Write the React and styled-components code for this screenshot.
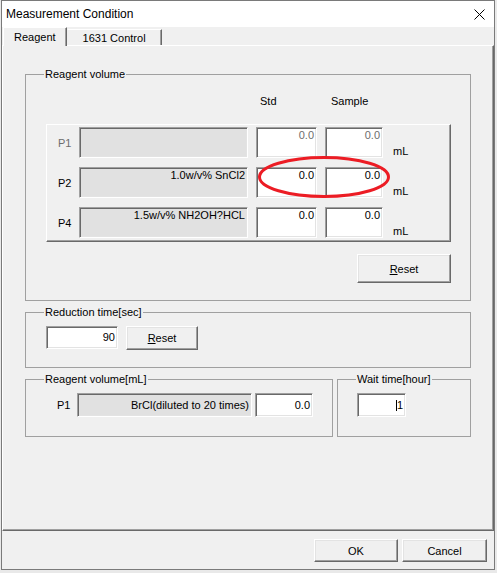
import React from "react";
import styled, { createGlobalStyle } from "styled-components";

const GlobalStyle = createGlobalStyle`
  html, body {
    margin: 0;
    padding: 0;
    background: #e9e9e9;
  }
  body {
    font-family: "Liberation Sans", Arial, sans-serif;
    font-size: 11px;
    color: #000;
  }
  * {
    box-sizing: border-box;
  }
`;

const Window = styled.div`
  margin-left: 1px;
  width: 494px;
  height: 570px;
  background: #f0f0f0;
  border: 1px solid #7a7a7a;
  display: flex;
  flex-direction: column;
`;

const TitleBar = styled.div`
  height: 26px;
  flex: none;
  background: #fff;
  display: flex;
  align-items: center;
  justify-content: space-between;
  padding: 0 9px 0 4px;
  font-size: 12px;
  color: #000;
`;

const TabStrip = styled.div`
  height: 18px;
  flex: none;
  display: flex;
  align-items: flex-end;
  padding-left: 1px;
`;

const Tab = styled.div`
  position: relative;
  display: flex;
  align-items: center;
  height: ${(p) => (p.$active ? "19px" : "16px")};
  margin-bottom: ${(p) => (p.$active ? "-1px" : "0")};
  z-index: ${(p) => (p.$active ? 1 : 0)};
  padding: ${(p) => (p.$active ? "0 10px" : "0 15px")};
  background: #f0f0f0;
  border-top: 1px solid #fff;
  border-left: 1px solid ${(p) => (p.$active ? "#fff" : "#f0f0f0")};
  border-right: 1px solid #696969;
  box-shadow: inset -1px 0 #a0a0a0;
  white-space: nowrap;
`;

const Panel = styled.div`
  flex: 1;
  display: flex;
  flex-direction: column;
  gap: 4px;
  padding: 21px 22px 0 22px;
  border-top: 1px solid #fff;
  border-left: 1px solid #fff;
  border-right: 1px solid #696969;
  border-bottom: 1px solid #696969;
  box-shadow: inset -1px -1px #a0a0a0;
`;

const Group = styled.fieldset`
  margin: 0;
  min-width: 0;
  border: 1px solid #a0a0a0;
  padding: ${(p) => p.$pad};
  display: flex;
  flex-direction: column;
  width: ${(p) => (p.$w ? `${p.$w}px` : "auto")};
`;

const Legend = styled.legend`
  margin-left: ${(p) => (p.$shift !== undefined ? p.$shift : -2)}px;
  padding: 0 1px;
  line-height: 14px;
  height: 14px;
`;

// label | reagent name | Std | Sample | unit
const columns = "24px 169px 61px 58px auto";

const ColumnHeads = styled.div`
  display: grid;
  grid-template-columns: ${columns};
  column-gap: 8px;
  line-height: 14px;
  padding-left: 1px;
  margin-bottom: 16px;
`;

const Head = styled.span`
  padding-left: ${(p) => p.$indent}px;
`;

const RaisedBox = styled.div`
  position: relative;
  width: 405px;
  padding: 2px 0 3px;
  display: grid;
  grid-template-columns: ${columns};
  grid-auto-rows: 31px;
  column-gap: 8px;
  row-gap: 9px;
  border: 1px solid;
  border-color: #fff #696969 #696969 #fff;
  box-shadow: inset -1px -1px #a0a0a0;
`;

const PLabel = styled.span`
  align-self: center;
  flex: none;
  width: ${(p) => (p.$w ? `${p.$w}px` : "auto")};
  padding-left: 11px;
  color: ${(p) => (p.$disabled ? "#6d6d6d" : "#000")};
  line-height: 14px;
`;

const Edit = styled.div`
  height: ${(p) => (p.$h ? `${p.$h}px` : "100%")};
  width: ${(p) => (p.$w ? `${p.$w}px` : "auto")};
  margin-left: ${(p) => p.$ml || 0}px;
  background: ${(p) => (p.$readonly ? "#e1e1e1" : "#fff")};
  color: ${(p) => (p.$disabled ? "#6d6d6d" : "#000")};
  border: 1px solid;
  border-color: #a0a0a0 #fff #fff #a0a0a0;
  box-shadow: inset 1px 1px #696969, inset -1px -1px #e3e3e3;
  padding: ${(p) => (p.$center ? "0 2px" : "1px 2px 0 2px")};
  line-height: ${(p) => (p.$center ? `${p.$h - 2}px` : "13px")};
  text-align: right;
  white-space: nowrap;
  overflow: hidden;
  flex: none;
`;

const Unit = styled.span`
  align-self: end;
  padding-left: 2px;
  line-height: 14px;
`;

const Ring = styled.svg`
  position: absolute;
  left: 211px;
  top: 31px;
  overflow: visible;
  pointer-events: none;
`;

const Button = styled.button`
  font-family: inherit;
  font-size: 11px;
  color: #000;
  width: ${(p) => p.$w}px;
  height: ${(p) => p.$h}px;
  background: #f0f0f0;
  border: 1px solid;
  border-color: #fff #696969 #696969 #fff;
  box-shadow: inset -1px -1px #a0a0a0, inset 1px 1px #e3e3e3;
  padding: 0;
  flex: none;
`;

const ResetRow = styled.div`
  display: flex;
  justify-content: flex-end;
  margin-top: 12px;
`;

const FieldRow = styled.div`
  display: flex;
  align-items: flex-start;
  gap: ${(p) => p.$gap || 0}px;
`;

const SplitRow = styled.div`
  display: flex;
  gap: 4px;
`;

const Caret = styled.span`
  display: inline-block;
  width: 1px;
  height: 11px;
  background: #000;
  vertical-align: -2px;
`;

const Footer = styled.div`
  height: 38px;
  flex: none;
  display: flex;
  justify-content: flex-end;
  align-items: flex-start;
  gap: 4px;
  padding: 8px 7px 0 0;
`;

function CloseIcon() {
  return (
    <svg width="11" height="11" viewBox="0 0 11 11">
      <path d="M0.5 0.5 L10.5 10.5 M10.5 0.5 L0.5 10.5" stroke="#000" strokeWidth="1" />
    </svg>
  );
}

const reagentRows = [
  { id: "P1", name: "", std: "0.0", sample: "0.0", disabled: true },
  { id: "P2", name: "1.0w/v% SnCl2", std: "0.0", sample: "0.0" },
  { id: "P4", name: "1.5w/v% NH2OH?HCL", std: "0.0", sample: "0.0" },
];

export default function App() {
  return (
    <>
      <GlobalStyle />
      <Window>
        <TitleBar>
          <span>Measurement Condition</span>
          <CloseIcon />
        </TitleBar>
        <TabStrip>
          <Tab $active>Reagent</Tab>
          <Tab>1631 Control</Tab>
        </TabStrip>
        <Panel>
          <Group $pad="13px 19px 17px 20px">
            <Legend>Reagent volume</Legend>
            <ColumnHeads>
              <span />
              <span />
              <Head $indent={4}>Std</Head>
              <Head $indent={6}>Sample</Head>
            </ColumnHeads>
            <RaisedBox>
              {reagentRows.map((r) => (
                <React.Fragment key={r.id}>
                  <PLabel $disabled={r.disabled}>{r.id}</PLabel>
                  <Edit $readonly>{r.name}</Edit>
                  <Edit $disabled={r.disabled}>{r.std}</Edit>
                  <Edit $disabled={r.disabled}>{r.sample}</Edit>
                  <Unit>mL</Unit>
                </React.Fragment>
              ))}
              <Ring width="132" height="42">
                <ellipse cx="66" cy="21" rx="64.5" ry="19.5" fill="none" stroke="#ec1c24" strokeWidth="3" />
              </Ring>
            </RaisedBox>
            <ResetRow>
              <Button $w={94} $h={29}>
                <u>R</u>eset
              </Button>
            </ResetRow>
          </Group>

          <Group $pad="7px 19px 17px 20px">
            <Legend>Reduction time[sec]</Legend>
            <FieldRow $gap={8}>
              <Edit $center $w={72} $h={23}>90</Edit>
              <Button $w={72} $h={24}>
                <u>R</u>eset
              </Button>
            </FieldRow>
          </Group>

          <SplitRow>
            <Group $w={308} $pad="7px 0 19px 20px">
              <Legend>Reagent volume[mL]</Legend>
              <FieldRow>
                <PLabel $w={31}>P1</PLabel>
                <Edit $readonly $center $w={175} $h={24}>BrCl(diluted to 20 times)</Edit>
                <Edit $center $w={58} $h={24} $ml={3}>0.0</Edit>
              </FieldRow>
            </Group>
            <Group $w={134} $pad="7px 0 19px 19px">
              <Legend $shift={-1}>Wait time[hour]</Legend>
              <FieldRow>
                <Edit $center $w={49} $h={24}>
                  <Caret />1
                </Edit>
              </FieldRow>
            </Group>
          </SplitRow>
        </Panel>
        <Footer>
          <Button $w={84} $h={23}>OK</Button>
          <Button $w={85} $h={23}>Cancel</Button>
        </Footer>
      </Window>
    </>
  );
}
